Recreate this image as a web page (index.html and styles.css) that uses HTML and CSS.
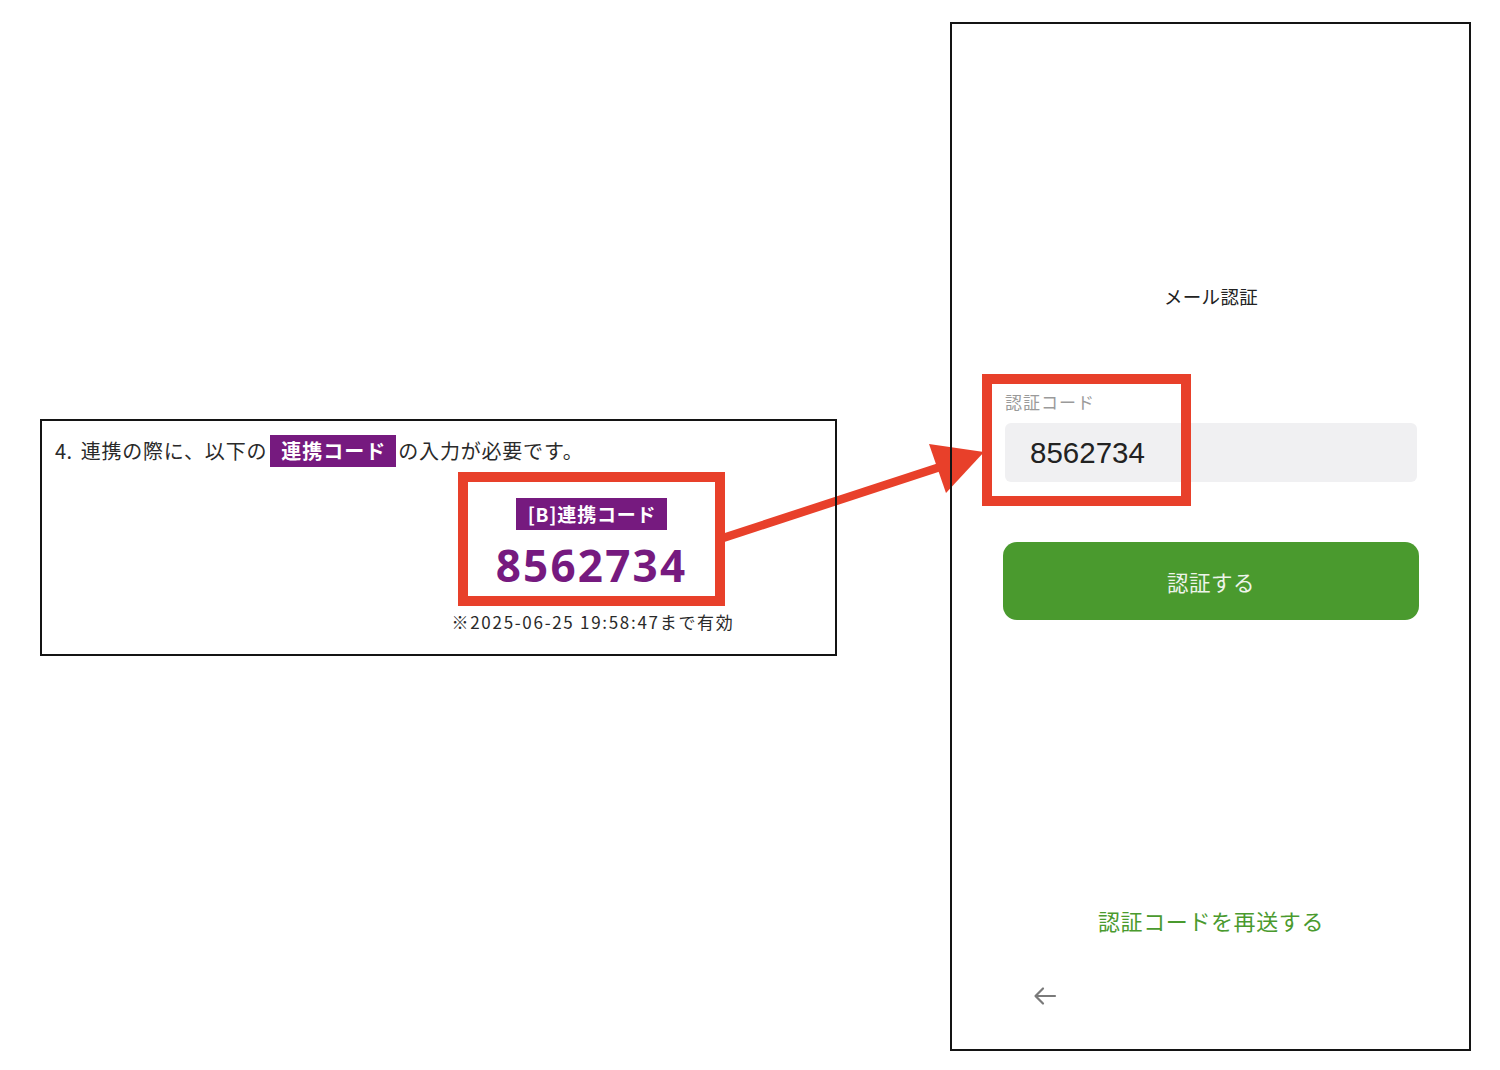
FILE: index.html
```html
<!DOCTYPE html>
<html lang="ja">
<head>
<meta charset="utf-8">
<title>連携コード</title>
<link rel="stylesheet" href="styles.css">
</head>
<body>
<div class="stage">
  <svg class="arrow" width="1500" height="1070" viewBox="0 0 1500 1070">
    <line x1="720" y1="539" x2="940" y2="467" stroke="#e8402a" stroke-width="8.5"/>
    <polygon points="929,444 984,452 946,493" fill="#e8402a"/>
  </svg>

  <section class="doc">
    <p class="doc-line"><span class="num">4.</span>連携の際に、以下の<span class="tag">連携コード</span>の入力が必要です。</p>
    <div class="code-col">
      <div class="code-card">
        <span class="code-label">[B]連携コード</span>
        <span class="code-value">8562734</span>
      </div>
      <p class="expiry">※2025-06-25 19:58:47まで有効</p>
    </div>
  </section>

  <section class="phone">
    <h1 class="phone-title">メール認証</h1>
    <label class="field-label">認証コード</label>
    <div class="field">8562734</div>
    <div class="mark"></div>
    <button class="submit">認証する</button>
    <a class="resend">認証コードを再送する</a>
    <svg class="back" width="24" height="20" viewBox="0 0 24 20">
      <path d="M22 10H3M10 2.5L2.5 10L10 17.5" fill="none" stroke="#7a7a7a" stroke-width="2.2" stroke-linecap="round" stroke-linejoin="round"/>
    </svg>
  </section>
</div>
</body>
</html>
```

FILE: styles.css
```css
html {
  margin: 0;
  padding: 0;
  background: #ffffff;
}

body {
  margin: 0;
  padding: 0;
  width: 1500px;
  height: 1070px;
  overflow: hidden;
  font-family: "Noto Sans CJK JP", "Noto Sans", sans-serif;
  color: #222;
}

.stage {
  position: relative;
  display: flex;
  align-items: flex-start;
  padding: 22px 0 0 40px;
  height: 1048px;
}

.arrow {
  position: absolute;
  left: 0;
  top: 0;
  z-index: -1;
}

/* left document box */
.doc {
  margin-top: 397px;
  width: 797px;
  height: 237px;
  box-sizing: border-box;
  border: 2px solid #141414;
  padding: 14px 0 0 13px;
}

.doc-line {
  margin: 0;
  font-size: 20px;
  letter-spacing: 0.8px;
  line-height: 32px;
  color: #2a2a2a;
  display: flex;
  align-items: center;
  white-space: nowrap;
}

.num {
  margin-right: 8px;
  letter-spacing: 0.5px;
}

.tag {
  display: inline-block;
  background: #761a7f;
  color: #fff;
  font-weight: 700;
  font-size: 20px;
  letter-spacing: 1px;
  line-height: 32px;
  height: 32px;
  padding: 0 10px 0 11px;
  margin: 0 2px 0 3px;
}

.code-col {
  margin: 5px 0 0 397px;
  width: 282px;
  display: flex;
  flex-direction: column;
  align-items: center;
}

.code-card {
  width: 267px;
  height: 134px;
  box-sizing: border-box;
  border: 10px solid #e8402a;
  display: flex;
  flex-direction: column;
  align-items: center;
  padding-top: 16px;
  margin-left: -3px;
}

.code-label {
  display: block;
  background: #761a7f;
  color: #fff;
  font-weight: 700;
  font-size: 19px;
  letter-spacing: 0.8px;
  line-height: 32px;
  height: 32px;
  padding: 0 11px 0 12px;
  white-space: nowrap;
}

.code-value {
  display: block;
  margin-top: 13px;
  font-family: "Open Sans", "Noto Sans", sans-serif;
  font-weight: 700;
  font-size: 44px;
  line-height: 44px;
  letter-spacing: 2.2px;
  color: #761a7f;
}

.expiry {
  margin: 6px 0 0;
  font-size: 17px;
  letter-spacing: 1.7px;
  line-height: 20px;
  color: #2a2a2a;
  white-space: nowrap;
}

/* right phone frame */
.phone {
  position: relative;
  margin-left: 113px;
  width: 521px;
  height: 1029px;
  box-sizing: border-box;
  border: 2px solid #141414;
  padding: 260px 52px 0 53px;
  display: flex;
  flex-direction: column;
  align-items: stretch;
}

.phone-title {
  margin: 0;
  font-size: 18.5px;
  font-weight: 400;
  letter-spacing: 0.3px;
  line-height: 24px;
  text-align: center;
  color: #222;
}

.field-label {
  margin-top: 83px;
  font-size: 17px;
  letter-spacing: 1px;
  line-height: 22px;
  color: #9a9a9a;
}

.field {
  margin-top: 10px;
  height: 59px;
  border-radius: 6px;
  background: #f0f0f2;
  padding-left: 25px;
  display: flex;
  align-items: center;
  font-family: "Liberation Sans", Arial, sans-serif;
  font-size: 29.5px;
  color: #222;
}

.mark {
  position: absolute;
  left: 30px;
  top: 350px;
  width: 209px;
  height: 132px;
  box-sizing: border-box;
  border: 10px solid #e8402a;
}

.submit {
  margin: 60px -2px 0;
  height: 78px;
  border: none;
  border-radius: 14px;
  background: #4a9a2e;
  color: #eef4ea;
  font-family: "Noto Sans CJK JP", sans-serif;
  font-size: 21.5px;
  letter-spacing: 0.5px;
  padding: 0;
}

.resend {
  margin-top: 285px;
  font-size: 22px;
  letter-spacing: 0.6px;
  line-height: 30px;
  text-align: center;
  color: #4a9a2e;
}

.back {
  margin: 51px 0 0 28px;
  display: block;
}
```
